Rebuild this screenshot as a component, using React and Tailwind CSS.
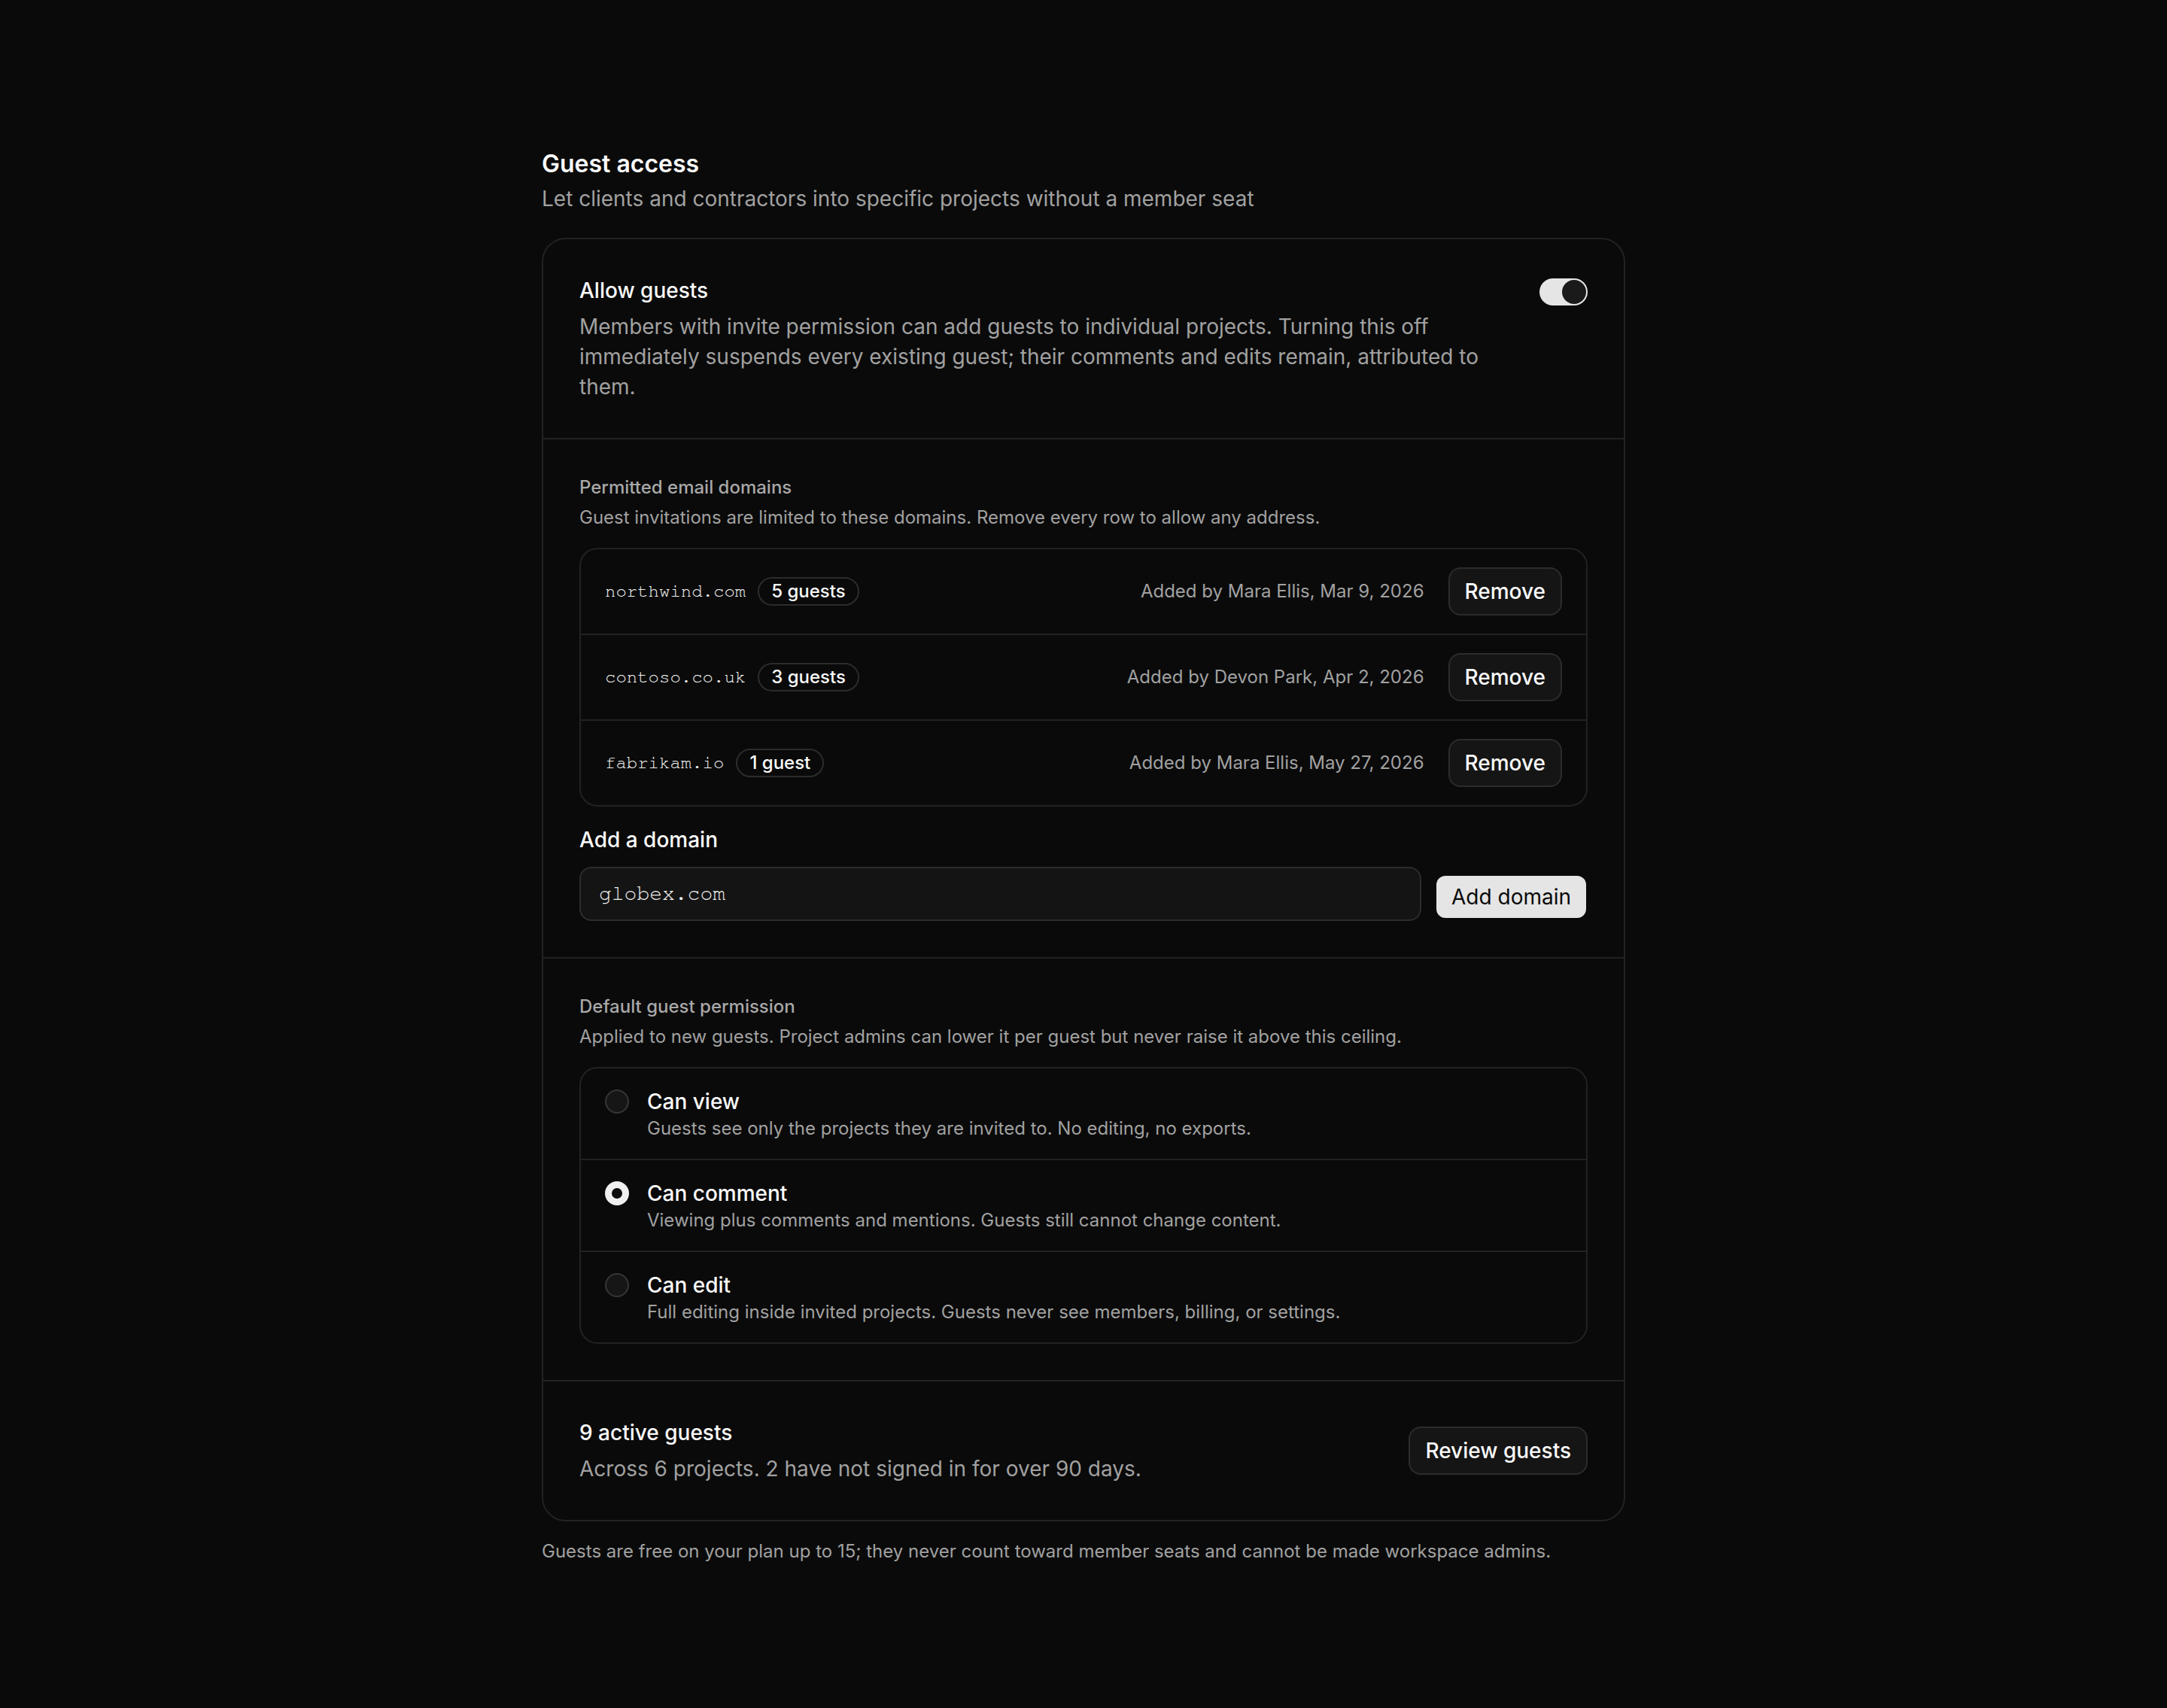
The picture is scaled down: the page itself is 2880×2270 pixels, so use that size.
import React from "react";

const domains = [
  { name: "northwind.com", count: "5 guests", added: "Added by Mara Ellis, Mar 9, 2026" },
  { name: "contoso.co.uk", count: "3 guests", added: "Added by Devon Park, Apr 2, 2026" },
  { name: "fabrikam.io", count: "1 guest", added: "Added by Mara Ellis, May 27, 2026" },
];

const perms = [
  { title: "Can view", desc: "Guests see only the projects they are invited to. No editing, no exports.", selected: false },
  { title: "Can comment", desc: "Viewing plus comments and mentions. Guests still cannot change content.", selected: true },
  { title: "Can edit", desc: "Full editing inside invited projects. Guests never see members, billing, or settings.", selected: false },
];

function Radio({ selected }) {
  if (selected) {
    return <span className="mt-1 block h-8 w-8 shrink-0 rounded-full border-[9px] border-[#f0f0f0] bg-[#0a0a0a]" />;
  }
  return <span className="mt-1 block h-8 w-8 shrink-0 rounded-full border-2 border-[#363636] bg-[#161616]" />;
}

export default function App() {
  return (
    <div className="min-h-screen bg-[#0a0a0a] font-['Inter','Noto_Sans',sans-serif] text-[#fafafa] antialiased">
      <div className="mx-auto w-[1440px] pt-[194px] pb-48">
        <h1 className="text-[32px] font-semibold leading-[48px] text-[#fafafa]">Guest access</h1>
        <p className="mt-[2px] text-[28px] leading-[40px] text-[#a1a1a1]">
          Let clients and contractors into specific projects without a member seat
        </p>

        <div className="mt-8 rounded-[32px] border-2 border-[#222222] bg-[#0a0a0a]">
          {/* Allow guests */}
          <div className="flex items-start gap-12 border-b-2 border-[#222222] p-12">
            <div className="flex-1">
              <div className="text-[28px] font-medium leading-[40px] text-[#fafafa]">Allow guests</div>
              <p className="mt-2 text-[28px] leading-[40px] text-[#a1a1a1]">
                Members with invite permission can add guests to individual projects. Turning this off immediately
                suspends every existing guest; their comments and edits remain, attributed to them.
              </p>
            </div>
            <div className="mt-[4px] flex h-[36px] w-16 shrink-0 items-center justify-end rounded-full bg-[#e5e5e5] p-[2px]">
              <span className="block h-8 w-8 rounded-full bg-[#1a1a1a]" />
            </div>
          </div>

          {/* Domains */}
          <div className="border-b-2 border-[#222222] p-12">
            <div className="text-[24px] font-medium leading-[32px] text-[#a8a8a8]">Permitted email domains</div>
            <p className="mt-2 text-[24px] leading-[32px] text-[#a1a1a1]">
              Guest invitations are limited to these domains. Remove every row to allow any address.
            </p>
            <div className="mt-6 rounded-[24px] border-2 border-[#222222]">
              {domains.map((d, i) => (
                <div
                  key={d.name}
                  className={`flex items-center justify-between gap-8 px-8 py-6 ${i > 0 ? "border-t-2 border-[#222222]" : ""}`}
                >
                  <div className="flex items-center gap-4">
                    <span className="font-['Nimbus_Mono_PS','Nimbus_Mono_L','FreeMono','Courier_10_Pitch','Liberation_Mono',monospace] text-[24px] text-[#f5f5f5]">
                      {d.name}
                    </span>
                    <span className="flex h-[38px] items-center rounded-full border-2 border-[#2c2c2c] px-4 text-[24px] font-medium text-[#fafafa]">
                      {d.count}
                    </span>
                  </div>
                  <div className="flex items-center gap-8">
                    <span className="text-[24px] text-[#a1a1a1]">{d.added}</span>
                    <button className="flex h-16 items-center rounded-2xl border-2 border-[#2c2c2c] bg-[#151515] px-5 text-[28px] font-medium text-[#fafafa]">
                      Remove
                    </button>
                  </div>
                </div>
              ))}
            </div>

            <div className="mt-6 text-[28px] font-medium leading-[40px] text-[#fafafa]">Add a domain</div>
            <div className="mt-4 flex items-center gap-5">
              <div className="flex h-[72px] flex-1 items-center rounded-2xl border-2 border-[#2c2c2c] bg-[#141414] px-6">
                <span className="font-['Nimbus_Mono_PS','Nimbus_Mono_L','FreeMono','Courier_10_Pitch','Liberation_Mono',monospace] text-[28px] text-[#f0f0f0]">
                  globex.com
                </span>
              </div>
              <button className="mr-[2px] mt-[7px] flex h-14 items-center rounded-xl bg-[#e5e5e5] px-5 text-[28px] text-[#0a0a0a]">
                Add domain
              </button>
            </div>
          </div>

          {/* Default permission */}
          <div className="border-b-2 border-[#222222] p-12">
            <div className="text-[24px] font-medium leading-[32px] text-[#a8a8a8]">Default guest permission</div>
            <p className="mt-2 text-[24px] leading-[32px] text-[#a1a1a1]">
              Applied to new guests. Project admins can lower it per guest but never raise it above this ceiling.
            </p>
            <div className="mt-6 rounded-[24px] border-2 border-[#222222]">
              {perms.map((p, i) => (
                <div
                  key={p.title}
                  className={`flex items-start gap-6 px-8 py-6 ${i > 0 ? "border-t-2 border-[#222222]" : ""}`}
                >
                  <Radio selected={p.selected} />
                  <div>
                    <div className="text-[28px] font-medium leading-[40px] text-[#fafafa]">{p.title}</div>
                    <div className="text-[24px] leading-[32px] text-[#a1a1a1]">{p.desc}</div>
                  </div>
                </div>
              ))}
            </div>
          </div>

          {/* Active guests */}
          <div className="flex items-center justify-between gap-12 p-12">
            <div>
              <div className="text-[28px] font-medium leading-[40px] text-[#fafafa]">9 active guests</div>
              <p className="mt-2 text-[28px] leading-[40px] text-[#a1a1a1]">
                Across 6 projects. 2 have not signed in for over 90 days.
              </p>
            </div>
            <button className="flex h-16 items-center rounded-2xl border-2 border-[#2c2c2c] bg-[#151515] px-5 text-[28px] font-medium text-[#fafafa]">
              Review guests
            </button>
          </div>
        </div>

        <p className="mt-6 text-[24px] leading-[32px] text-[#a1a1a1]">
          Guests are free on your plan up to 15; they never count toward member seats and cannot be made workspace
          admins.
        </p>
      </div>
    </div>
  );
}
